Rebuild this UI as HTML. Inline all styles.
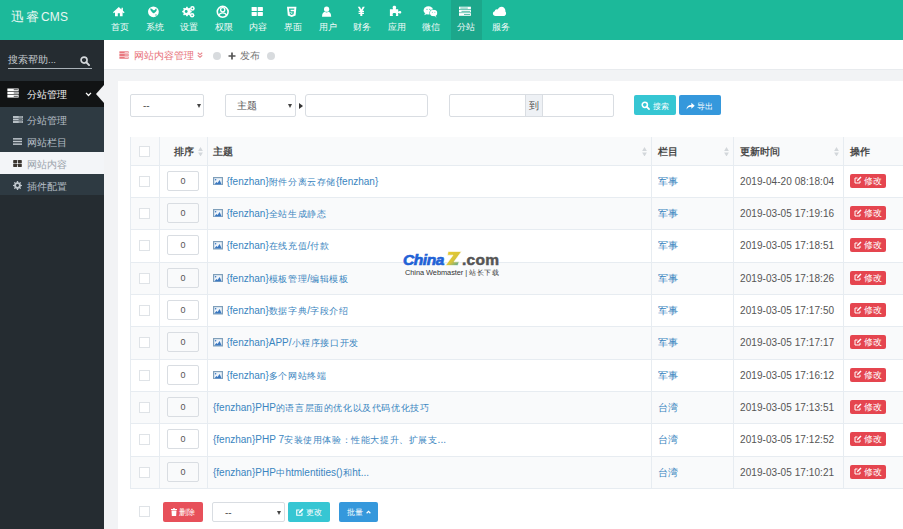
<!DOCTYPE html>
<html><head><meta charset="utf-8">
<style>
*{box-sizing:border-box;margin:0;padding:0}
html,body{width:903px;height:529px;overflow:hidden;background:#f2f3f5;font-family:"Liberation Sans",sans-serif;position:relative}
#hdr{position:absolute;left:0;top:0;width:903px;height:40px;background:#1cb99a}
#logo{position:absolute;left:11px;top:10px;color:#fff;font-size:14px;white-space:nowrap;line-height:16px}
.nav{position:absolute;top:0;height:40px;width:34px;color:#fff;text-align:center}
.nav i{position:absolute;left:0;top:6px;width:34px;height:12px;display:flex;align-items:center;justify-content:center}
.nav span{position:absolute;left:1.2px;width:34px;top:21.5px;font-size:9px;line-height:10px;text-align:center;white-space:nowrap;color:#f4fbf9}
#navact{position:absolute;left:451px;top:0;width:31px;height:40px;background:#1ca78b}
#side{position:absolute;left:0;top:40px;width:104px;height:489px;background:#252c31}
#crumb{position:absolute;left:104px;top:40px;width:799px;height:29px;background:#fff}
#panel{position:absolute;left:118px;top:81px;width:785px;height:448px;background:#fff}
.t{position:absolute;white-space:nowrap}
.sel{position:absolute;border:1px solid #d9dde2;border-radius:2px;background:#fff;height:23px;top:94px}
.caret{position:absolute;width:0;height:0;border-left:2px solid transparent;border-right:2px solid transparent;border-top:4px solid #444}
.btn{position:absolute;color:#fff;font-size:9px;border-radius:2px;display:flex;align-items:center;justify-content:center;white-space:nowrap}
#table{position:absolute;left:130px;top:137px;width:790px;height:351px;border:1px solid #e7ecf1;background:#fff}
.vl{position:absolute;top:137px;height:351px;width:1px;background:#e7ecf1}
.row{position:absolute;left:131px;width:772px;height:32.35px;border-top:1px solid #e7ecf1}
.cb{position:absolute;left:8px;top:10px;width:11px;height:11px;border:1px solid #dfe3e7;background:#fff}
.ord{position:absolute;left:36px;top:5px;width:32px;height:20px;border:1px solid #d9dde2;border-radius:2px;font-size:9px;line-height:18px;text-align:center;color:#555}
.ttl .c{font-size:9px;letter-spacing:0.6px}
.ttl{position:absolute;left:82px;top:0;height:31px;line-height:31px;font-size:10px;color:#3a85c0;white-space:nowrap}
.pic{vertical-align:middle;margin-right:3.5px;position:relative;top:-1px}
.cat{position:absolute;left:527px;top:0;line-height:31px;font-size:10px;color:#3a85c0}
.dt{position:absolute;left:609px;top:0px;line-height:31px;font-size:10px;color:#555;white-space:nowrap;letter-spacing:0.07px}
.btnr{position:absolute;left:719px;top:8px;width:36px;height:14px;background:#e5454f;border-radius:2px;color:#fff;font-size:8.5px;line-height:14px;text-align:center;white-space:nowrap}
.btnr svg{vertical-align:middle;position:relative;top:-1px}
.th{position:absolute;top:138px;height:27px;line-height:27px;font-size:9.5px;font-weight:bold;color:#484848}
.sort{position:absolute;top:146.5px;line-height:0}
</style></head><body>
<div id="hdr">
  <div class="t" style="left:11px;top:10px;font-size:12.5px;line-height:14px;color:#e8f7f2;font-family:'Liberation Serif',serif;letter-spacing:1.6px">迅睿</div><div class="t" style="left:41px;top:10px;font-size:12px;line-height:14px;color:#e8f7f2;letter-spacing:0.15px">CMS</div>
  <div id="navact"></div>
<svg style="position:absolute;left:0;top:0" width="903" height="40" viewBox="0 0 903 40">
<g fill="#fff">
<path d="M118.8 7.1L113 12.3 113.9 13.2 115 12.3V16.3H117.8V13.3H119.9V16.3H122.6V12.3L123.7 13.2 124.6 12.3 122.9 10.8V7.8H121.5V9.6Z"/>
<circle cx="153.4" cy="11.8" r="5.4"/>
<path d="M182.2 10.9l1.1-.3.4-1-.6-1 .9-.9 1 .6 1-.4.3-1.1h1.3l.3 1.1 1 .4 1-.6.9.9-.6 1 .4 1 1.1.3v1.3l-1.1.3-.4 1 .6 1-.9.9-1-.6-1 .4-.3 1.1h-1.3l-.3-1.1-1-.4-1 .6-.9-.9.6-1-.4-1-1.1-.3z"/>
<circle cx="192.4" cy="8.4" r="2.3"/><circle cx="192.1" cy="15.3" r="2.3"/>
<circle cx="222.7" cy="11.8" r="5.4" fill="none" stroke="#fff" stroke-width="1.6"/>
<rect x="251.6" y="7" width="5.2" height="4" rx=".6"/><rect x="257.7" y="7" width="5.2" height="4" rx=".6"/>
<rect x="251.6" y="11.9" width="5.2" height="4" rx=".6"/><rect x="257.7" y="11.9" width="5.2" height="4" rx=".6"/>
<path d="M287 6.7H296.4L295.6 15.6 291.7 17 287.8 15.6Z"/>
<circle cx="326.6" cy="9.2" r="2.6"/><path d="M322 16.7C322 13.5 323.5 12 324.8 11.8 325.4 12.3 326 12.5 326.6 12.5S327.8 12.3 328.4 11.8C329.7 12 331.2 13.5 331.2 16.7Z"/>
<path d="M357.8 6.7H359.9L361.3 9.6 362.7 6.7H364.8L362.5 10.8H364V12H362.3V12.7H364V13.9H362.3V15.9H360.3V13.9H358.6V12.7H360.3V12H358.6V10.8H360.1Z"/>
<path d="M389.9 9.2H393C393 8.3 392.6 8 392.6 7.2 392.6 6.3 393.3 5.7 394.4 5.7S396.2 6.3 396.2 7.2C396.2 8 395.8 8.3 395.8 9.2H398.2V11.6C399 11.6 399.3 11 400 11 400.8 11 401.3 11.6 401.3 12.3S400.8 13.6 400 13.6C399.3 13.6 399 13 398.2 13V16.1H395.8C395.8 15.4 396.2 15 396.2 14.3 396.2 13.6 395.4 13.1 394.4 13.1S392.6 13.6 392.6 14.3C392.6 15 393 15.4 393 16.1H389.9Z"/>
<ellipse cx="428.4" cy="10.4" rx="4.8" ry="4.2"/><path d="M425 13.2 424.3 15.3 426.8 14Z"/>
<ellipse cx="433.6" cy="13" rx="3.7" ry="3.3"/><path d="M435.5 15.6 436.6 17.4 434.3 16.4Z"/>
<rect x="459" y="6.7" width="11.9" height="2.6"/><rect x="459" y="9.9" width="11.9" height="2.6"/><rect x="459" y="13.1" width="11.9" height="2.7"/>
<path d="M495.6 16.1C494 16.1 492.9 15 492.9 13.6 492.9 12.4 493.7 11.4 494.8 11.2 494.8 10.1 495.7 9.3 496.8 9.3 497.1 9.3 497.4 9.4 497.7 9.5 498.4 7.8 499.8 6.7 501.5 6.7 503.7 6.7 505.4 8.5 505.4 10.6 505.4 10.8 505.4 11 505.3 11.2 505.8 11.7 506.1 12.4 506.1 13.2 506.1 14.8 504.9 16.1 503.3 16.1Z"/>
</g>
<g fill="#1cb99a">
<path d="M150.2 8.6C151 8.2 151.8 8.8 152.6 9.4 153.2 9.9 153.6 10.4 154.2 10.3 155 10.1 155.4 9 156 8.2 156.6 8.8 156.9 9.6 156.6 10.6 156.2 11.8 155 12.6 154.2 13.2 153.5 13.7 152.8 13 152.2 12.2 151.4 11.3 150.2 10.6 150.2 8.6Z"/>
<circle cx="156" cy="15" r=".7"/>
<circle cx="186.2" cy="11.5" r="1.4"/><circle cx="192.4" cy="8.4" r=".8"/><circle cx="192.1" cy="15.3" r=".8"/>
<path d="M289 8.4H294.4L294.2 9.8H290.5L290.7 11.3H294L293.6 14.3 291.7 14.9 289.8 14.3 289.7 13.1H290.9L291 13.5 291.7 13.8 292.4 13.5 292.5 12.5H289.4Z"/>
<circle cx="427" cy="9.3" r=".55"/><circle cx="429.8" cy="9.3" r=".55"/><circle cx="432.3" cy="12.2" r=".45"/><circle cx="434.9" cy="12.2" r=".45"/>
</g>
<g fill="none" stroke="#1cb99a" stroke-width=".7"><ellipse cx="433.6" cy="13" rx="4" ry="3.6"/></g>
<g fill="#fff"><ellipse cx="433.6" cy="13" rx="3.5" ry="3.1"/></g>
<g fill="#1cb99a"><circle cx="432.3" cy="12.2" r=".45"/><circle cx="434.9" cy="12.2" r=".45"/></g>
<g fill="none" stroke="#fff" stroke-width="1.3"><circle cx="222.7" cy="9.8" r="2.1"/><path d="M218.7 15.6C219.6 13.6 221 12.9 222.7 12.9S225.8 13.6 226.7 15.6"/></g>
<g fill="#1ca78b"><rect x="460.3" y="7.7" width="7.5" height=".7"/><rect x="461.5" y="10.9" width="8.5" height=".7"/><rect x="464" y="14.2" width="6" height=".7"/></g>
</svg>

<div class="nav" style="left:102.0px"><span>首页</span></div>
<div class="nav" style="left:136.5px"><span>系统</span></div>
<div class="nav" style="left:171.0px"><span>设置</span></div>
<div class="nav" style="left:205.6px"><span>权限</span></div>
<div class="nav" style="left:240.2px"><span>内容</span></div>
<div class="nav" style="left:274.8px"><span>界面</span></div>
<div class="nav" style="left:309.4px"><span>用户</span></div>
<div class="nav" style="left:344.0px"><span>财务</span></div>
<div class="nav" style="left:378.6px"><span>应用</span></div>
<div class="nav" style="left:413.2px"><span>微信</span></div>
<div class="nav" style="left:447.8px"><span>分站</span></div>
<div class="nav" style="left:482.4px"><span>服务</span></div>

</div>
<div id="side">
</div>
<div class="t" style="left:8px;top:53.5px;font-size:9.6px;line-height:12px;color:#c4cacf">搜索帮助...</div>
<div style="position:absolute;left:8px;top:67.6px;width:84px;height:1.3px;background:#a9b1b7"></div>
<svg style="position:absolute;left:80px;top:56px" width="10" height="10" viewBox="0 0 16 16"><circle cx="6.5" cy="6.5" r="4.8" fill="none" stroke="#d5d9dc" stroke-width="2.6"/><path d="M10 10 14.5 14.5" stroke="#d5d9dc" stroke-width="3" stroke-linecap="round"/></svg>
<div style="position:absolute;left:0;top:81px;width:104px;height:26.5px;background:#111314"></div>
<svg style="position:absolute;left:7px;top:88px" width="12" height="10" viewBox="0 0 16 13"><g fill="#fff"><rect x="0.5" y="0.5" width="15" height="3.5"/><rect x="0.5" y="4.8" width="15" height="3.5"/><rect x="0.5" y="9.1" width="15" height="3.5"/></g><g fill="#16191b"><rect x="9" y="6" width="5.5" height="1"/><rect x="9" y="1.7" width="5.5" height="1"/><rect x="9" y="10.3" width="5.5" height="1"/></g></svg>
<div class="t" style="left:26.5px;top:89px;font-size:9.6px;line-height:12px;color:#f2f2f2">分站管理</div>
<svg style="position:absolute;left:85px;top:92px" width="7" height="5" viewBox="0 0 8 6"><path d="M1 1 4 4.2 7 1" fill="none" stroke="#fff" stroke-width="1.5"/></svg>
<div style="position:absolute;left:95.5px;top:85px;width:0;height:0;border-top:9.5px solid transparent;border-bottom:9.5px solid transparent;border-right:8.5px solid #f2f3f5"></div>
<div style="position:absolute;left:0;top:107px;width:104px;height:45px;background:#2e3a42"></div>
<div style="position:absolute;left:0;top:152px;width:104px;height:22px;background:#f3f5f8"></div>
<div style="position:absolute;left:0;top:174px;width:104px;height:21px;background:#2e3a42"></div>
<svg style="position:absolute;left:13px;top:116px" width="10" height="7" viewBox="0 0 16 11"><g fill="#c0c7cd"><rect x="0" y="0" width="16" height="3"/><rect x="0" y="4" width="16" height="3"/><rect x="0" y="8" width="16" height="3"/></g><g fill="#2e3a42"><rect x="9" y="1" width="6" height="1"/><rect x="9" y="5" width="6" height="1"/><rect x="9" y="9" width="6" height="1"/></g></svg>
<div class="t" style="left:27px;top:115px;font-size:9.6px;line-height:12px;color:#b6bfc7">分站管理</div>
<svg style="position:absolute;left:13px;top:138px" width="9" height="7" viewBox="0 0 16 12"><g fill="#c0c7cd"><rect x="0" y="0" width="16" height="2.6"/><rect x="0" y="4.7" width="16" height="2.6"/><rect x="0" y="9.4" width="16" height="2.6"/></g></svg>
<div class="t" style="left:27px;top:137px;font-size:9.6px;line-height:12px;color:#b6bfc7">网站栏目</div>
<svg style="position:absolute;left:13px;top:160px" width="9" height="7" viewBox="0 0 16 13"><g fill="#3a3530"><rect x="0" y="0" width="7.3" height="6" rx="0.8"/><rect x="8.7" y="0" width="7.3" height="6" rx="0.8"/><rect x="0" y="7" width="7.3" height="6" rx="0.8"/><rect x="8.7" y="7" width="7.3" height="6" rx="0.8"/></g></svg>
<div class="t" style="left:27px;top:159px;font-size:9.6px;line-height:12px;color:#9aa3ab">网站内容</div>
<svg style="position:absolute;left:13px;top:181px" width="9" height="9" viewBox="0 0 16 16"><path fill="#c0c7cd" d="M7 0H9L9.5 2.2 11.2 2.9 13.1 1.7 14.3 2.9 13.1 4.8 13.8 6.5 16 7V9L13.8 9.5 13.1 11.2 14.3 13.1 13.1 14.3 11.2 13.1 9.5 13.8 9 16H7L6.5 13.8 4.8 13.1 2.9 14.3 1.7 13.1 2.9 11.2 2.2 9.5 0 9V7L2.2 6.5 2.9 4.8 1.7 2.9 2.9 1.7 4.8 2.9 6.5 2.2Z"/><circle cx="8" cy="8" r="2.6" fill="#2e3a42"/></svg>
<div class="t" style="left:27px;top:181px;font-size:9.6px;line-height:12px;color:#b6bfc7">插件配置</div>
<div id="crumb"></div>
<div style="position:absolute;left:104px;top:69px;width:799px;height:1px;background:#e8ebee"></div>
<svg style="position:absolute;left:119px;top:51px" width="10" height="8" viewBox="0 0 16 13"><g fill="#e8787f"><rect x="0.5" y="0.5" width="15" height="3.5"/><rect x="0.5" y="4.8" width="15" height="3.5"/><rect x="0.5" y="9.1" width="15" height="3.5"/></g><g fill="#fff"><rect x="9" y="6" width="5.5" height="1"/><rect x="9" y="1.7" width="5.5" height="1"/><rect x="9" y="10.3" width="5.5" height="1"/></g></svg>
<div class="t" style="left:133.5px;top:49.5px;font-size:9.6px;line-height:12px;color:#e8737b">网站内容管理</div>
<svg style="position:absolute;left:197px;top:52px" width="6" height="6" viewBox="0 0 8 8"><path d="M1 1 4 3.5 7 1M1 4.5 4 7 7 4.5" fill="none" stroke="#e8838a" stroke-width="1.4"/></svg>
<div style="position:absolute;left:213px;top:51.5px;width:8px;height:8px;border-radius:50%;background:#d8dbde"></div>
<svg style="position:absolute;left:228px;top:52px" width="8" height="8" viewBox="0 0 8 8"><path d="M4 0.5V7.5M0.5 4H7.5" stroke="#555" stroke-width="1.7"/></svg>
<div class="t" style="left:240px;top:49.5px;font-size:9.6px;line-height:12px;color:#777">发布</div>
<div style="position:absolute;left:267px;top:51.5px;width:8px;height:8px;border-radius:50%;background:#d8dbde"></div>
<div id="panel"></div>

<!-- filter row -->
<div class="sel" style="left:130px;width:74px"><span class="t" style="left:12px;top:5px;font-size:10px;color:#555">--</span><i class="caret" style="left:65.5px;top:8.5px"></i></div>
<div class="sel" style="left:225px;width:71px"><span class="t" style="left:11px;top:4.5px;font-size:9.6px;color:#555">主题</span><i class="caret" style="left:61.5px;top:8.5px"></i></div>
<i class="abs caret" style="position:absolute;left:299px;top:103px;border-top:3px solid transparent;border-bottom:3px solid transparent;border-left:4px solid #333;border-right:0"></i>
<div class="sel" style="left:305px;width:123px;border-radius:3px"></div>
<div class="sel" style="left:449px;width:165px"><div style="position:absolute;left:75px;top:0;width:18px;height:21px;background:#eef1f5;border-left:1px solid #d9dde2;border-right:1px solid #d9dde2;font-size:10px;color:#555;text-align:center;line-height:21px">到</div></div>
<div class="btn" style="left:634px;top:95px;width:42px;height:20px;background:#36c6d3"></div><svg style="position:absolute;left:641px;top:101px" width="9" height="9" viewBox="0 0 16 16"><circle cx="6.8" cy="6.8" r="4.6" fill="none" stroke="#fff" stroke-width="2.8"/><path d="M10.3 10.3 14.3 14.3" stroke="#fff" stroke-width="3.2" stroke-linecap="round"/></svg><div class="t" style="left:652.5px;top:100.5px;font-size:8px;line-height:11px;color:#fff">搜索</div>
<div class="btn" style="left:679px;top:95px;width:42px;height:20px;background:#3598dc"></div><svg style="position:absolute;left:686px;top:101.5px" width="9" height="8" viewBox="0 0 16 14"><path fill="#fff" d="M1 13C1 8 4 5 9.5 5V1L15.5 6.5 9.5 12V8.2C5.5 8.2 3 9.5 1 13Z"/></svg><div class="t" style="left:697px;top:100.5px;font-size:8px;line-height:11px;color:#fff">导出</div>

<!-- table -->
<div id="table"></div>
<div class="th" style="left:131px;top:137px;width:772px;background:#f9fafb;height:28px"></div>
<div style="position:absolute;left:130px;top:488px;width:773px;height:1px;background:#e7ecf1"></div>
<i class="cb" style="position:absolute;left:139px;top:146px"></i>
<div class="row" style="top:164.50px;background:#fff"><i class="cb"></i><div class="ord">0</div><div class="ttl"><svg class="pic" viewBox="0 0 10 8.5" width="10" height="8.5"><rect x="0.6" y="0.6" width="8.8" height="7.3" fill="#eef4fa" stroke="#7f9fba" stroke-width="1.2"/><path fill="#3b78c0" d="M1.4 7.4 3.3 5 4.6 6 6.6 2.9 8.7 7.4Z"/><circle cx="2.6" cy="2.7" r=".8" fill="#3b78c0"/></svg>{fenzhan}<span class="c">附件分离云存储</span>{fenzhan}</div><div class="cat">军事</div><div class="dt">2019-04-20 08:18:04</div><div class="btnr"><svg viewBox="0 0 16 16" width="8" height="8"><path d="M12 9.5V14H2V4H7" fill="none" stroke="#fff" stroke-width="2"/><path fill="#fff" d="M6 10.5 6.5 7.5 13 1 15 3 8.5 9.5Z"/></svg> 修改</div></div>
<div class="row" style="top:196.85px;background:#f9fafb"><i class="cb"></i><div class="ord">0</div><div class="ttl"><svg class="pic" viewBox="0 0 10 8.5" width="10" height="8.5"><rect x="0.6" y="0.6" width="8.8" height="7.3" fill="#eef4fa" stroke="#7f9fba" stroke-width="1.2"/><path fill="#3b78c0" d="M1.4 7.4 3.3 5 4.6 6 6.6 2.9 8.7 7.4Z"/><circle cx="2.6" cy="2.7" r=".8" fill="#3b78c0"/></svg>{fenzhan}<span class="c">全站生成静态</span></div><div class="cat">军事</div><div class="dt">2019-03-05 17:19:16</div><div class="btnr"><svg viewBox="0 0 16 16" width="8" height="8"><path d="M12 9.5V14H2V4H7" fill="none" stroke="#fff" stroke-width="2"/><path fill="#fff" d="M6 10.5 6.5 7.5 13 1 15 3 8.5 9.5Z"/></svg> 修改</div></div>
<div class="row" style="top:229.20px;background:#fff"><i class="cb"></i><div class="ord">0</div><div class="ttl"><svg class="pic" viewBox="0 0 10 8.5" width="10" height="8.5"><rect x="0.6" y="0.6" width="8.8" height="7.3" fill="#eef4fa" stroke="#7f9fba" stroke-width="1.2"/><path fill="#3b78c0" d="M1.4 7.4 3.3 5 4.6 6 6.6 2.9 8.7 7.4Z"/><circle cx="2.6" cy="2.7" r=".8" fill="#3b78c0"/></svg>{fenzhan}<span class="c">在线充值</span>/<span class="c">付款</span></div><div class="cat">军事</div><div class="dt">2019-03-05 17:18:51</div><div class="btnr"><svg viewBox="0 0 16 16" width="8" height="8"><path d="M12 9.5V14H2V4H7" fill="none" stroke="#fff" stroke-width="2"/><path fill="#fff" d="M6 10.5 6.5 7.5 13 1 15 3 8.5 9.5Z"/></svg> 修改</div></div>
<div class="row" style="top:261.55px;background:#f9fafb"><i class="cb"></i><div class="ord">0</div><div class="ttl"><svg class="pic" viewBox="0 0 10 8.5" width="10" height="8.5"><rect x="0.6" y="0.6" width="8.8" height="7.3" fill="#eef4fa" stroke="#7f9fba" stroke-width="1.2"/><path fill="#3b78c0" d="M1.4 7.4 3.3 5 4.6 6 6.6 2.9 8.7 7.4Z"/><circle cx="2.6" cy="2.7" r=".8" fill="#3b78c0"/></svg>{fenzhan}<span class="c">模板管理</span>/<span class="c">编辑模板</span></div><div class="cat">军事</div><div class="dt">2019-03-05 17:18:26</div><div class="btnr"><svg viewBox="0 0 16 16" width="8" height="8"><path d="M12 9.5V14H2V4H7" fill="none" stroke="#fff" stroke-width="2"/><path fill="#fff" d="M6 10.5 6.5 7.5 13 1 15 3 8.5 9.5Z"/></svg> 修改</div></div>
<div class="row" style="top:293.90px;background:#fff"><i class="cb"></i><div class="ord">0</div><div class="ttl"><svg class="pic" viewBox="0 0 10 8.5" width="10" height="8.5"><rect x="0.6" y="0.6" width="8.8" height="7.3" fill="#eef4fa" stroke="#7f9fba" stroke-width="1.2"/><path fill="#3b78c0" d="M1.4 7.4 3.3 5 4.6 6 6.6 2.9 8.7 7.4Z"/><circle cx="2.6" cy="2.7" r=".8" fill="#3b78c0"/></svg>{fenzhan}<span class="c">数据字典</span>/<span class="c">字段介绍</span></div><div class="cat">军事</div><div class="dt">2019-03-05 17:17:50</div><div class="btnr"><svg viewBox="0 0 16 16" width="8" height="8"><path d="M12 9.5V14H2V4H7" fill="none" stroke="#fff" stroke-width="2"/><path fill="#fff" d="M6 10.5 6.5 7.5 13 1 15 3 8.5 9.5Z"/></svg> 修改</div></div>
<div class="row" style="top:326.25px;background:#f9fafb"><i class="cb"></i><div class="ord">0</div><div class="ttl"><svg class="pic" viewBox="0 0 10 8.5" width="10" height="8.5"><rect x="0.6" y="0.6" width="8.8" height="7.3" fill="#eef4fa" stroke="#7f9fba" stroke-width="1.2"/><path fill="#3b78c0" d="M1.4 7.4 3.3 5 4.6 6 6.6 2.9 8.7 7.4Z"/><circle cx="2.6" cy="2.7" r=".8" fill="#3b78c0"/></svg>{fenzhan}APP/<span class="c">小程序接口开发</span></div><div class="cat">军事</div><div class="dt">2019-03-05 17:17:17</div><div class="btnr"><svg viewBox="0 0 16 16" width="8" height="8"><path d="M12 9.5V14H2V4H7" fill="none" stroke="#fff" stroke-width="2"/><path fill="#fff" d="M6 10.5 6.5 7.5 13 1 15 3 8.5 9.5Z"/></svg> 修改</div></div>
<div class="row" style="top:358.60px;background:#fff"><i class="cb"></i><div class="ord">0</div><div class="ttl"><svg class="pic" viewBox="0 0 10 8.5" width="10" height="8.5"><rect x="0.6" y="0.6" width="8.8" height="7.3" fill="#eef4fa" stroke="#7f9fba" stroke-width="1.2"/><path fill="#3b78c0" d="M1.4 7.4 3.3 5 4.6 6 6.6 2.9 8.7 7.4Z"/><circle cx="2.6" cy="2.7" r=".8" fill="#3b78c0"/></svg>{fenzhan}<span class="c">多个网站终端</span></div><div class="cat">军事</div><div class="dt">2019-03-05 17:16:12</div><div class="btnr"><svg viewBox="0 0 16 16" width="8" height="8"><path d="M12 9.5V14H2V4H7" fill="none" stroke="#fff" stroke-width="2"/><path fill="#fff" d="M6 10.5 6.5 7.5 13 1 15 3 8.5 9.5Z"/></svg> 修改</div></div>
<div class="row" style="top:390.95px;background:#f9fafb"><i class="cb"></i><div class="ord">0</div><div class="ttl">{fenzhan}PHP<span class="c">的语言层面的优化以及代码优化技巧</span></div><div class="cat">台湾</div><div class="dt">2019-03-05 17:13:51</div><div class="btnr"><svg viewBox="0 0 16 16" width="8" height="8"><path d="M12 9.5V14H2V4H7" fill="none" stroke="#fff" stroke-width="2"/><path fill="#fff" d="M6 10.5 6.5 7.5 13 1 15 3 8.5 9.5Z"/></svg> 修改</div></div>
<div class="row" style="top:423.30px;background:#fff"><i class="cb"></i><div class="ord">0</div><div class="ttl">{fenzhan}PHP 7<span class="c">安装使用体验：性能大提升、扩展支</span>...</div><div class="cat">台湾</div><div class="dt">2019-03-05 17:12:52</div><div class="btnr"><svg viewBox="0 0 16 16" width="8" height="8"><path d="M12 9.5V14H2V4H7" fill="none" stroke="#fff" stroke-width="2"/><path fill="#fff" d="M6 10.5 6.5 7.5 13 1 15 3 8.5 9.5Z"/></svg> 修改</div></div>
<div class="row" style="top:455.65px;background:#f9fafb"><i class="cb"></i><div class="ord">0</div><div class="ttl">{fenzhan}PHP<span class="c">中</span>htmlentities()<span class="c">和</span>ht...</div><div class="cat">台湾</div><div class="dt">2019-03-05 17:10:21</div><div class="btnr"><svg viewBox="0 0 16 16" width="8" height="8"><path d="M12 9.5V14H2V4H7" fill="none" stroke="#fff" stroke-width="2"/><path fill="#fff" d="M6 10.5 6.5 7.5 13 1 15 3 8.5 9.5Z"/></svg> 修改</div></div>

<div class="vl" style="left:159px"></div>
<div class="vl" style="left:207px"></div>
<div class="vl" style="left:651px"></div>
<div class="vl" style="left:733px"></div>
<div class="vl" style="left:843px"></div>
<div class="th" style="left:174px">排序</div><span class="sort" style="left:198px"><svg viewBox="0 0 6 12" width="5" height="9.5"><path fill="#d3d7db" d="M3 0 6 5H0Z M3 12 0 7H6Z"/></svg></span>
<div class="th" style="left:213px">主题</div><span class="sort" style="left:642px"><svg viewBox="0 0 6 12" width="5" height="9.5"><path fill="#d3d7db" d="M3 0 6 5H0Z M3 12 0 7H6Z"/></svg></span>
<div class="th" style="left:658px">栏目</div><span class="sort" style="left:724px"><svg viewBox="0 0 6 12" width="5" height="9.5"><path fill="#d3d7db" d="M3 0 6 5H0Z M3 12 0 7H6Z"/></svg></span>
<div class="th" style="left:740px">更新时间</div><span class="sort" style="left:834px"><svg viewBox="0 0 6 12" width="5" height="9.5"><path fill="#d3d7db" d="M3 0 6 5H0Z M3 12 0 7H6Z"/></svg></span>
<div class="th" style="left:850px">操作</div>

<!-- watermark -->
<div class="t" style="left:403px;top:251px;font-size:15.5px;line-height:18px;font-weight:bold;font-style:italic;color:#1f62d6;letter-spacing:-0.4px;-webkit-text-stroke:0.7px #1f62d6">China</div>
<svg style="position:absolute;left:445px;top:251px" width="17" height="15" viewBox="0 0 17 15"><defs><linearGradient id="zg" x1="0" y1="0" x2="1" y2="1"><stop offset="0" stop-color="#e9cc2e"/><stop offset=".55" stop-color="#d8c43a"/><stop offset="1" stop-color="#2f9fb5"/></linearGradient></defs><path fill="url(#zg)" stroke="#fff" stroke-width=".6" d="M3.2 0.5H16.5L9 10.8H14.2L12.8 14.5H0.5L8 4.2H2.4Z"/></svg>
<div class="t" style="left:462px;top:251px;font-size:15.5px;line-height:18px;font-weight:bold;color:#555;letter-spacing:0.3px;-webkit-text-stroke:0.5px #555">.com</div>
<div class="t" style="left:405px;top:268px;font-size:7.4px;line-height:9px;color:#333;letter-spacing:-0.05px">China Webmaster | <span style="letter-spacing:0.6px">站长下载</span></div>
<!-- bottom -->
<i class="cb" style="position:absolute;left:139px;top:506px"></i>
<div class="btn" style="left:163px;top:502px;width:40px;height:20px;background:#e7505a"></div><svg style="position:absolute;left:171px;top:508px" width="6" height="8" viewBox="0 0 12 16"><path fill="#fff" d="M0 2H4V0.5H8V2H12V4H0ZM1 5H11L10.3 16H1.7Z"/></svg><div class="t" style="left:178.5px;top:507px;font-size:8.3px;line-height:11px;color:#fff">删除</div>
<div class="sel" style="left:212px;top:502px;width:73px;height:20px"><span class="t" style="left:12px;top:3.5px;font-size:10px;color:#555">--</span><i class="caret" style="left:64px;top:7.5px"></i></div>
<div class="btn" style="left:288px;top:502px;width:42px;height:20px;background:#36c6d3"></div><svg style="position:absolute;left:295.5px;top:508px" width="8" height="8" viewBox="0 0 16 16"><path d="M12 9.5V14.5H1.5V4H7" fill="none" stroke="#fff" stroke-width="2.2"/><path fill="#fff" d="M5.5 11 6 7.5 12.5 1 15 3.5 8.5 10Z"/></svg><div class="t" style="left:305.5px;top:507px;font-size:8.3px;line-height:11px;color:#fff">更改</div>
<div class="btn" style="left:339px;top:502px;width:39px;height:20px;background:#3598dc"></div><div class="t" style="left:346.5px;top:507px;font-size:8.3px;line-height:11px;color:#fff">批量</div><svg style="position:absolute;left:366px;top:510px" width="5" height="4" viewBox="0 0 8 6"><path d="M1 5 4 1.8 7 5" fill="none" stroke="#fff" stroke-width="1.8"/></svg>
</body></html>
